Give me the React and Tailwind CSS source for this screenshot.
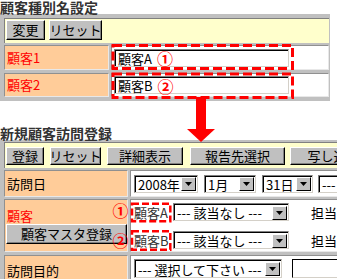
import React from 'react'

const FONT = "font-['Noto_Sans_CJK_JP','Noto_Sans',sans-serif]"

function Btn({ children, className = '' }) {
  return (
    <div className={`flex items-center justify-center shrink-0 bg-[#c0c0c0] border border-t-white border-l-white border-r-black border-b-black shadow-[inset_-1px_-1px_0_#808080] text-[13px] leading-[16px] text-black whitespace-nowrap ${className}`}>
      {children}
    </div>
  )
}

function Arrow() {
  return (
    <div className="w-[15px] h-[14px] shrink-0 mr-[1px] bg-[#c0c0c0] border border-t-white border-l-white border-r-black border-b-black flex items-center justify-center">
      <svg width="7" height="4" viewBox="0 0 7 4">
        <polygon points="0,0 7,0 3.5,4" fill="#000" />
      </svg>
    </div>
  )
}

function Select({ label, className = '' }) {
  return (
    <div className={`flex shrink-0 bg-white border border-t-[#808080] border-l-[#808080] border-r-[#d4d0c8] border-b-[#d4d0c8] ${className}`}>
      <div className="flex-1 flex items-center border-t border-l border-black min-w-0">
        <span className="flex-1 pl-[2px] text-[13px] leading-[15px] text-black whitespace-nowrap">{label}</span>
        <Arrow />
      </div>
    </div>
  )
}

function Cell({ children, className = '' }) {
  return (
    <div className={`border border-t-[#909090] border-l-[#909090] border-r-[#e8e8e8] border-b-[#e8e8e8] ${className}`}>
      {children}
    </div>
  )
}

function NameInput({ name, mark }) {
  return (
    <div className="w-[175px] h-[18px] shrink-0 bg-white border border-t-[#808080] border-l-[#808080] border-r-[#d4d0c8] border-b-[#d4d0c8]">
      <div className="h-full flex items-center border-t border-l border-black pl-[2px] text-[13px] leading-[15px]">
        <span className="text-black">{name}</span>
        <span className="ml-[5px] text-[16px] leading-[16px] text-[#ff0000] font-bold">{mark}</span>
      </div>
    </div>
  )
}

export default function App() {
  return (
    <div className={`relative w-[337px] h-[279px] overflow-hidden bg-white ${FONT}`}>
      <h2 className="h-[14px] text-[14px] leading-[14px] font-bold text-[#333] whitespace-nowrap">顧客種別名設定</h2>

      {/* 顧客種別名設定 */}
      <div className="w-[330px] bg-[#c0c0c0] pt-[4px] pb-[4px] pl-[4px] pr-[1px] flex flex-col">
        <div className="h-[25px] bg-[#ffffcc] border-t border-l border-[#808080] flex items-start gap-[4px] pt-[1px] pl-[1px]">
          <Btn className="w-[39px] h-[20px]">変更</Btn>
          <Btn className="w-[53px] h-[20px]">リセット</Btn>
        </div>
        <div className="mt-[2px] h-[25px] flex gap-[2px]">
          <Cell className="w-[105px] shrink-0 bg-[#ffcc99] flex items-center pl-[2px] text-[13px] text-[#ff0000]">顧客1</Cell>
          <Cell className="flex-1 bg-white flex items-center pl-[2px]">
            <NameInput name="顧客A" mark="①" />
          </Cell>
        </div>
        <div className="mt-[3px] h-[24px] flex gap-[2px]">
          <Cell className="w-[105px] shrink-0 bg-[#ffcc99] flex items-center pl-[2px] text-[13px] text-[#ff0000]">顧客2</Cell>
          <Cell className="flex-1 bg-white flex items-center pl-[2px]">
            <NameInput name="顧客B" mark="②" />
          </Cell>
        </div>
      </div>

      <h2 className="mt-[25px] h-[14px] text-[14px] leading-[14px] font-bold text-[#333] whitespace-nowrap">新規顧客訪問登録</h2>

      {/* 新規顧客訪問登録 */}
      <div className="w-[380px] bg-[#c0c0c0] pt-[2px] pl-[4px] flex flex-col">
        <div className="h-[26px] bg-[#ffffcc] border-t border-l border-[#808080] flex items-center pl-[1px]">
          <Btn className="w-[38px] h-[18px]">登録</Btn>
          <Btn className="ml-[6px] w-[51px] h-[18px]">リセット</Btn>
          <Btn className="ml-[6px] w-[76px] h-[18px]">詳細表示</Btn>
          <Btn className="ml-[7px] w-[95px] h-[18px]">報告先選択</Btn>
          <Btn className="ml-[5px] w-[100px] h-[18px]">写し送付先</Btn>
        </div>

        <div className="mt-[2px] h-[27px] flex gap-[2px]">
          <Cell className="w-[124px] shrink-0 bg-[#ffcc99] flex items-center pl-[2px] text-[13px] text-black">訪問日</Cell>
          <Cell className="flex-1 bg-white flex items-center pl-[3px]">
            <Select label="2008年" className="w-[64px] h-[18px]" />
            <Select label="1月" className="ml-[6px] w-[52px] h-[18px]" />
            <Select label="31日" className="ml-[6px] w-[51px] h-[18px]" />
            <Select label="---" className="ml-[5px] w-[50px] h-[18px]" />
          </Cell>
        </div>

        <div className="mt-[2px] h-[53px] flex gap-[2px]">
          <Cell className="w-[124px] shrink-0 bg-[#ffcc99] flex flex-col pt-[9px] pl-[1px]">
            <span className="pl-[1px] h-[14px] text-[13px] leading-[14px] text-[#ff0000]">顧客</span>
            <Btn className="mt-[1px] w-[121px] h-[20px]">顧客マスタ登録</Btn>
          </Cell>
          <Cell className="flex-1 bg-white flex flex-col pt-[2px]">
            {[
              { name: '顧客A', top: '' },
              { name: '顧客B', top: 'mt-[8px]' },
            ].map(r => (
              <div key={r.name} className={`flex items-center h-[20px] ${r.top}`}>
                <span className="w-[42px] shrink-0 pl-[3px] text-[13px] leading-[15px] text-[#333] whitespace-nowrap">{r.name}</span>
                <Select label="--- 該当なし ---" className="w-[116px] h-[18px]" />
                <span className="ml-[22px] text-[13px] leading-[15px] text-black whitespace-nowrap">担当者：</span>
              </div>
            ))}
          </Cell>
        </div>

        <div className="mt-[3px] h-[30px] flex gap-[2px]">
          <Cell className="w-[124px] shrink-0 bg-[#ffcc99] flex items-start pt-[5px] pl-[2px] text-[13px] text-black">訪問目的</Cell>
          <Cell className="flex-1 bg-white flex items-start pt-[3px] pl-[3px]">
            <Select label="--- 選択して下さい ---" className="w-[148px] h-[19px]" />
            <div className="ml-[10px] w-[60px] h-[19px] shrink-0 bg-white border border-t-black border-l-black border-r-[#d4d0c8] border-b-[#d4d0c8]" />
          </Cell>
        </div>
      </div>

      {/* annotations */}
      <svg className="absolute left-0 top-0 pointer-events-none" width="337" height="279">
        <rect x="113" y="45.5" width="179.5" height="23" fill="none" stroke="#ff0000" strokeWidth="3" strokeDasharray="9 4" />
        <rect x="113" y="74" width="179.5" height="23.5" fill="none" stroke="#ff0000" strokeWidth="3" strokeDasharray="9 4" />
        <rect x="132" y="203.7" width="38.3" height="17.6" fill="none" stroke="#ff0000" strokeWidth="2.5" strokeDasharray="7 3" />
        <rect x="132" y="231.3" width="38.3" height="18.4" fill="none" stroke="#ff0000" strokeWidth="2.5" strokeDasharray="7 3" />
        <rect x="196" y="97" width="10" height="32" fill="#ff0000" />
        <polygon points="187,129 215,129 201,142" fill="#ff0000" />
      </svg>
      <span className="absolute left-[112px] top-[201px] w-[17px] h-[17px] flex items-center justify-center text-[16px] leading-none font-bold text-[#ff0000]">①</span>
      <span className="absolute left-[112px] top-[231px] w-[17px] h-[17px] flex items-center justify-center text-[16px] leading-none font-bold text-[#ff0000]">②</span>
    </div>
  )
}
